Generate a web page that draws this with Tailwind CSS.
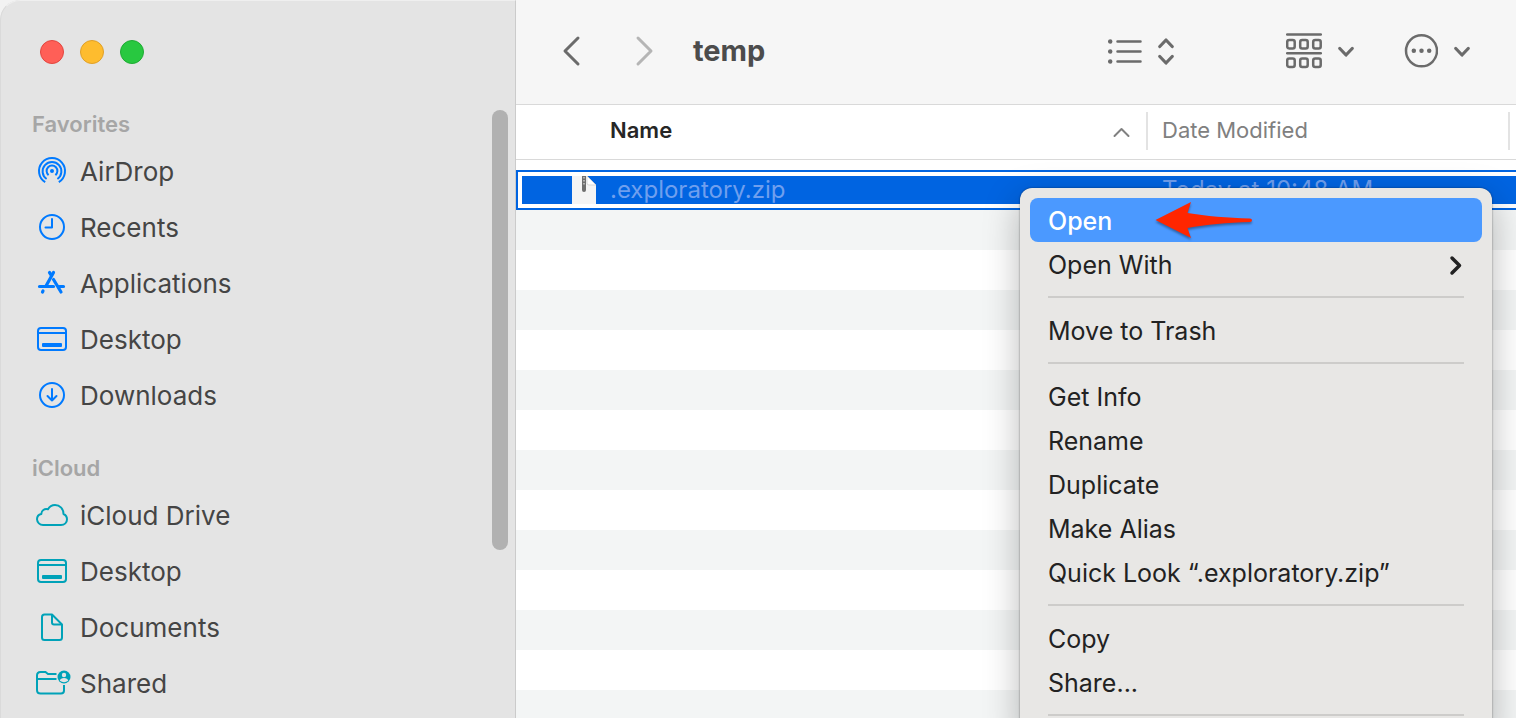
<!DOCTYPE html>
<html lang="en">

<head>
    <meta charset="UTF-8">
    <meta name="viewport" content="width=device-width, initial-scale=1.0">
    <title>temp</title>
    <script src="https://cdn.jsdelivr.net/npm/@tailwindcss/browser@4"></script>
</head>

<body class="bg-[#f2f2f2] font-['Inter',sans-serif]">
    <div class="flex h-screen overflow-hidden rounded-tl-[20px] bg-[#e4e4e4]">

        <!-- Sidebar -->
        <aside class="relative w-[516px] shrink-0 overflow-hidden rounded-tl-[20px] border-t border-l border-r border-t-[#efefef] border-l-[#dadada] border-r-[#cbcbcb] bg-[#e4e4e4]">
            <div class="flex h-[102px] items-center gap-4 pl-[39px]">
                <button aria-label="Close" class="size-6 rounded-full border border-[#e2463f] bg-[#ff5f57]"></button>
                <button aria-label="Minimize" class="size-6 rounded-full border border-[#e0a028] bg-[#febc2e]"></button>
                <button aria-label="Zoom" class="size-6 rounded-full border border-[#1fab34] bg-[#28c840]"></button>
            </div>

            <nav class="text-[26px] text-[#454545]">
                <h2 class="flex h-10 items-center pt-[2px] pl-[31px] text-[22px] font-semibold text-[#a6a6a6]">Favorites</h2>
                <ul class="mb-6">
                    <li>
                        <a href="#" class="flex h-14 items-center gap-[10px] pl-[33px]">
                            <svg class="size-9 text-[#007aff]" viewBox="0 0 36 36" fill="none" stroke="currentColor" stroke-width="2">
                                <circle cx="18" cy="18" r="2" fill="currentColor" stroke="none" />
                                <path d="M14.6 22.1A5.4 5.4 0 1 1 21.4 22.1M12.6 26A9.4 9.4 0 1 1 23.4 26M11.2 29.2A13 13 0 1 1 24.8 29.2" />
                            </svg>
                            AirDrop
                        </a>
                    </li>
                    <li>
                        <a href="#" class="flex h-14 items-center gap-[10px] pl-[33px]">
                            <svg class="size-9 text-[#007aff]" viewBox="0 0 36 36" fill="none" stroke="currentColor" stroke-width="2" stroke-linecap="round" stroke-linejoin="round">
                                <circle cx="18" cy="18" r="12" />
                                <path d="M18 10v8.500h-6.500" />
                            </svg>
                            Recents
                        </a>
                    </li>
                    <li>
                        <a href="#" class="flex h-14 items-center gap-[10px] pl-[33px]">
                            <svg class="size-9 text-[#007aff]" viewBox="0 0 36 36" fill="none" stroke="currentColor" stroke-width="3.200" stroke-linecap="round">
                                <path d="M19.500 7.500L12 21" />
                                <path d="M15.500 7.500L17.500 10.500M19.500 14.500L27 27M5.500 21.500H19.500M25.500 21.500H29.500M9 26L8.500 27" />
                            </svg>
                            Applications
                        </a>
                    </li>
                    <li>
                        <a href="#" class="flex h-14 items-center gap-[10px] pl-[33px]">
                            <svg class="size-9 text-[#007aff]" viewBox="0 0 36 36" fill="none" stroke="currentColor" stroke-width="2">
                                <rect x="4" y="7" width="28" height="22" rx="3" />
                                <path d="M4 12h28" />
                                <rect x="8" y="22" width="20" height="4" rx="1" fill="currentColor" stroke="none" />
                            </svg>
                            Desktop
                        </a>
                    </li>
                    <li>
                        <a href="#" class="flex h-14 items-center gap-[10px] pl-[33px]">
                            <svg class="size-9 text-[#007aff]" viewBox="0 0 36 36" fill="none" stroke="currentColor" stroke-width="2" stroke-linecap="round" stroke-linejoin="round">
                                <circle cx="18" cy="18" r="12" />
                                <path d="M18 12v11.500M13.500 19l4.500 4.500 4.500-4.500" />
                            </svg>
                            Downloads
                        </a>
                    </li>
                </ul>

                <h2 class="flex h-10 items-center pt-[2px] pl-[31px] text-[22px] font-semibold text-[#a6a6a6]">iCloud</h2>
                <ul>
                    <li>
                        <a href="#" class="flex h-14 items-center gap-[10px] pl-[33px]">
                            <svg class="size-9 text-[#00a2b8]" viewBox="0 0 36 36" fill="none" stroke="currentColor" stroke-width="2" stroke-linejoin="round">
                                <path d="M9 28A6 6 0 0 1 3 22.300C3 19.500 5 17.500 7.300 17C7.300 13.500 10.500 11.300 14 12.300C15.500 9.500 18 8 21 8C26 8 29.500 12 29.500 17C31.800 18 33 20 33 22.300C33 25.500 30.500 28 27 28Z" />
                            </svg>
                            iCloud Drive
                        </a>
                    </li>
                    <li>
                        <a href="#" class="flex h-14 items-center gap-[10px] pl-[33px]">
                            <svg class="size-9 text-[#00a2b8]" viewBox="0 0 36 36" fill="none" stroke="currentColor" stroke-width="2">
                                <rect x="4" y="7" width="28" height="22" rx="3" />
                                <path d="M4 12h28" />
                                <rect x="8" y="22" width="20" height="4" rx="1" fill="currentColor" stroke="none" />
                            </svg>
                            Desktop
                        </a>
                    </li>
                    <li>
                        <a href="#" class="flex h-14 items-center gap-[10px] pl-[33px]">
                            <svg class="size-9 text-[#00a2b8]" viewBox="0 0 36 36" fill="none" stroke="currentColor" stroke-width="2" stroke-linejoin="round">
                                <path d="M10.500 5.500H18L28 15.500V28.500Q28 31 25.500 31H10.500Q8 31 8 28.500V8Q8 5.500 10.500 5.500Z" />
                                <path d="M18 6v7.500Q18 15.500 20 15.500H28" />
                            </svg>
                            Documents
                        </a>
                    </li>
                    <li>
                        <a href="#" class="flex h-14 items-center gap-[10px] pl-[33px]">
                            <svg class="size-9 overflow-visible text-[#00a2b8]" viewBox="0 0 36 36" fill="none" stroke="currentColor" stroke-width="2">
                                <path d="M22.500 9H14L11.500 7H6.500Q3 7 3 10.500V25Q3 28.500 6.500 28.500H27Q30 28.500 30 25.500V20M3 14H22.500" />
                                <circle cx="30" cy="12" r="6.500" fill="currentColor" stroke="none" />
                                <circle cx="30" cy="10" r="2.200" fill="#e4e4e4" stroke="none" />
                                <path d="M25.800 15.800Q26.500 13 30 13T34.200 15.800Q30 18.500 25.800 15.800Z" fill="#e4e4e4" stroke="none" />
                            </svg>
                            Shared
                        </a>
                    </li>
                </ul>
            </nav>

            <!-- Scrollbar thumb -->
            <div class="absolute top-[109px] right-[7px] h-[440px] w-4 rounded-full bg-[#b1b1b1]"></div>
        </aside>

        <main class="relative min-w-0 flex-1 bg-white">
            <!-- Toolbar -->
            <header class="flex h-[105px] items-center border-b border-[#d9d9d9] bg-[#f6f6f6] px-[46px] pb-[2px] text-[#6b6b6b]">
                <button aria-label="Back" class="mr-[54px]">
                    <svg class="h-8 w-[19px]" viewBox="0 0 19 32" fill="none" stroke="currentColor" stroke-width="3" stroke-linecap="round" stroke-linejoin="round">
                        <path d="M16 3L3 16L16 29" />
                    </svg>
                </button>
                <button aria-label="Forward" class="mr-[39px] text-[#b5b5b5]">
                    <svg class="h-8 w-[19px]" viewBox="0 0 19 32" fill="none" stroke="currentColor" stroke-width="3" stroke-linecap="round" stroke-linejoin="round">
                        <path d="M3 3L16 16L3 29" />
                    </svg>
                </button>
                <h1 class="text-[29px] font-bold text-[#4c4c4c]">temp</h1>

                <button aria-label="View as list" class="ml-auto flex items-center gap-4">
                    <svg class="h-9 w-[34px]" viewBox="0 0 34 36" fill="none" stroke="currentColor" stroke-width="2.500" stroke-linecap="round">
                        <path d="M9.500 8.500H32.500M9.500 18.500H32.500M9.500 28.500H32.500" />
                        <path d="M2.200 8.500h.01M2.200 18.500h.01M2.200 28.500h.01" stroke-width="4.500" />
                    </svg>
                    <svg class="h-9 w-4" viewBox="0 0 16 36" fill="none" stroke="currentColor" stroke-width="3.200" stroke-linecap="round" stroke-linejoin="round">
                        <path d="M1.800 13.500L8 7L14.200 13.500M1.800 23.500L8 30L14.200 23.500" />
                    </svg>
                </button>
                <button aria-label="Group items" class="ml-[112px] flex items-center gap-4">
                    <svg class="size-9" viewBox="0 0 36 36" fill="none" stroke="currentColor" stroke-width="2.500" stroke-linecap="round">
                        <path d="M1.200 1.500H34.800M1.200 20.200H34.800" />
                        <rect x="1.200" y="7" width="7.500" height="8.500" rx="2" />
                        <rect x="14.200" y="7" width="7.500" height="8.500" rx="2" />
                        <rect x="27.200" y="7" width="7.500" height="8.500" rx="2" />
                        <rect x="1.200" y="25.500" width="7.500" height="8.500" rx="2" />
                        <rect x="14.200" y="25.500" width="7.500" height="8.500" rx="2" />
                        <rect x="27.200" y="25.500" width="7.500" height="8.500" rx="2" />
                    </svg>
                    <svg class="h-9 w-4" viewBox="0 0 16 36" fill="none" stroke="currentColor" stroke-width="3.200" stroke-linecap="round" stroke-linejoin="round">
                        <path d="M1.800 15.500L8 22L14.200 15.500" />
                    </svg>
                </button>
                <button aria-label="More actions" class="ml-[50px] flex items-center gap-4">
                    <svg class="h-9 w-[34px]" viewBox="0 0 34 36" fill="none" stroke="currentColor" stroke-width="2.500" stroke-linecap="round">
                        <circle cx="17.500" cy="17.800" r="15.500" />
                        <path d="M9.800 17.800h.01M17.500 17.800h.01M25.200 17.800h.01" stroke-width="4.500" />
                    </svg>
                    <svg class="h-9 w-4" viewBox="0 0 16 36" fill="none" stroke="currentColor" stroke-width="3.200" stroke-linecap="round" stroke-linejoin="round">
                        <path d="M1.800 15.500L8 22L14.200 15.500" />
                    </svg>
                </button>
            </header>

            <!-- File list -->
            <table class="w-full table-fixed border-separate border-spacing-0 text-left text-[22px]">
                <thead>
                    <tr class="h-[55px]">
                        <th class="border-b border-[#d9d9d9] p-0 pb-[3px]">
                            <div class="flex h-[38px] items-center justify-between border-r-2 border-[#e3e3e3] pr-4 pl-[94px] font-semibold text-[#262626]">
                                Name
                                <svg class="h-5 w-[18px] text-[#808080]" viewBox="0 0 18 20" fill="none" stroke="currentColor" stroke-width="2" stroke-linecap="round" stroke-linejoin="round">
                                    <path d="M2.500 15L9.500 8L16.500 15" />
                                </svg>
                            </div>
                        </th>
                        <th class="w-[362px] border-b border-[#d9d9d9] p-0 pb-[3px]">
                            <div class="flex h-[38px] items-center border-r-2 border-[#e3e3e3] pl-[14px] font-normal text-[#808080]">Date Modified</div>
                        </th>
                        <th class="w-[6px] border-b border-[#d9d9d9] p-0"></th>
                    </tr>
                </thead>
                <tbody>
                    <tr class="h-[10px]"><td colspan="3" class="p-0"></td></tr>
                    <tr class="h-10 text-2xl text-[#6f9fee]">
                        <td class="border-y-2 border-l-2 border-[#0064e1] py-1 pr-0 pl-1">
                            <div class="flex h-7 items-center gap-[14px] bg-[#0064e1] pl-[50px]">
                                <svg class="h-7 w-6" viewBox="0 0 24 28">
                                    <path d="M0 0H15L24 9V28H0Z" fill="#f4f4f4" />
                                    <path d="M15 0L24 9H17Q15 9 15 7Z" fill="#fff" stroke="#c9c9c9" stroke-width=".7" />
                                    <path d="M10 0h4v14q0 2-2 2t-2-2Z" fill="#6e6e6e" />
                                    <path d="M12 1v9" stroke="#c8c8c8" stroke-width="1.500" stroke-dasharray="1.500 1.500" />
                                </svg>
                                .exploratory.zip
                            </div>
                        </td>
                        <td class="border-y-2 border-[#0064e1] px-0 py-1">
                            <div class="flex h-7 items-center bg-[#0064e1] pl-[14px]">Today at 10:48 AM</div>
                        </td>
                        <td class="border-y-2 border-[#0064e1] px-0 py-1">
                            <div class="h-7 bg-[#0064e1]"></div>
                        </td>
                    </tr>
                    <tr class="h-10 bg-[#f3f5f5]"><td colspan="3"></td></tr>
                    <tr class="h-10"><td colspan="3"></td></tr>
                    <tr class="h-10 bg-[#f3f5f5]"><td colspan="3"></td></tr>
                    <tr class="h-10"><td colspan="3"></td></tr>
                    <tr class="h-10 bg-[#f3f5f5]"><td colspan="3"></td></tr>
                    <tr class="h-10"><td colspan="3"></td></tr>
                    <tr class="h-10 bg-[#f3f5f5]"><td colspan="3"></td></tr>
                    <tr class="h-10"><td colspan="3"></td></tr>
                    <tr class="h-10 bg-[#f3f5f5]"><td colspan="3"></td></tr>
                    <tr class="h-10"><td colspan="3"></td></tr>
                    <tr class="h-10 bg-[#f3f5f5]"><td colspan="3"></td></tr>
                    <tr class="h-10"><td colspan="3"></td></tr>
                    <tr class="h-10 bg-[#f3f5f5]"><td colspan="3"></td></tr>
                </tbody>
            </table>

            <!-- Context menu -->
            <div role="menu" class="absolute top-[188px] right-6 flex w-[472px] flex-col rounded-xl bg-[#e8e7e5] p-[10px] text-[25px] text-[#222222] shadow-[0_0_2px_rgba(0,0,0,0.5),0_12px_36px_rgba(0,0,0,0.28)]">
                <button role="menuitem" class="relative flex h-11 items-center rounded-lg bg-[#4b99ff] px-[18px] pt-[3px] font-medium text-white">
                    Open
                    <svg class="absolute top-1 left-[124px] h-9 w-[100px] drop-shadow-[0_2px_1px_rgba(0,0,0,0.35)]" viewBox="0 0 100 36" fill="#ff2600">
                        <path d="M1.500 18L37 0L33.500 11C52 14 73 16 96 16.500Q98 16.500 98 18.200T96 20C73 20.500 52 22.500 33.500 26L37 36Z" />
                    </svg>
                </button>
                <button role="menuitem" class="flex h-11 items-center justify-between px-[18px] pt-[3px]">
                    Open With
                    <svg class="h-6 w-4" viewBox="0 0 16 24" fill="none" stroke="currentColor" stroke-width="3.500" stroke-linecap="round" stroke-linejoin="round">
                        <path d="M4 4L11.500 11.500L4 19" />
                    </svg>
                </button>
                <hr class="mx-[18px] my-[10px] border-t-2 border-[#cdccca]">
                <button role="menuitem" class="flex h-11 items-center px-[18px] pt-[3px]">Move to Trash</button>
                <hr class="mx-[18px] my-[10px] border-t-2 border-[#cdccca]">
                <button role="menuitem" class="flex h-11 items-center px-[18px] pt-[3px]">Get Info</button>
                <button role="menuitem" class="flex h-11 items-center px-[18px] pt-[3px]">Rename</button>
                <button role="menuitem" class="flex h-11 items-center px-[18px] pt-[3px]">Duplicate</button>
                <button role="menuitem" class="flex h-11 items-center px-[18px] pt-[3px]">Make Alias</button>
                <button role="menuitem" class="flex h-11 items-center px-[18px] pt-[3px]">Quick Look “.exploratory.zip”</button>
                <hr class="mx-[18px] my-[10px] border-t-2 border-[#cdccca]">
                <button role="menuitem" class="flex h-11 items-center px-[18px] pt-[3px]">Copy</button>
                <button role="menuitem" class="flex h-11 items-center px-[18px] pt-[3px]">Share...</button>
                <hr class="mx-[18px] my-[10px] border-t-2 border-[#cdccca]">
            </div>
        </main>
    </div>
</body>

</html>
